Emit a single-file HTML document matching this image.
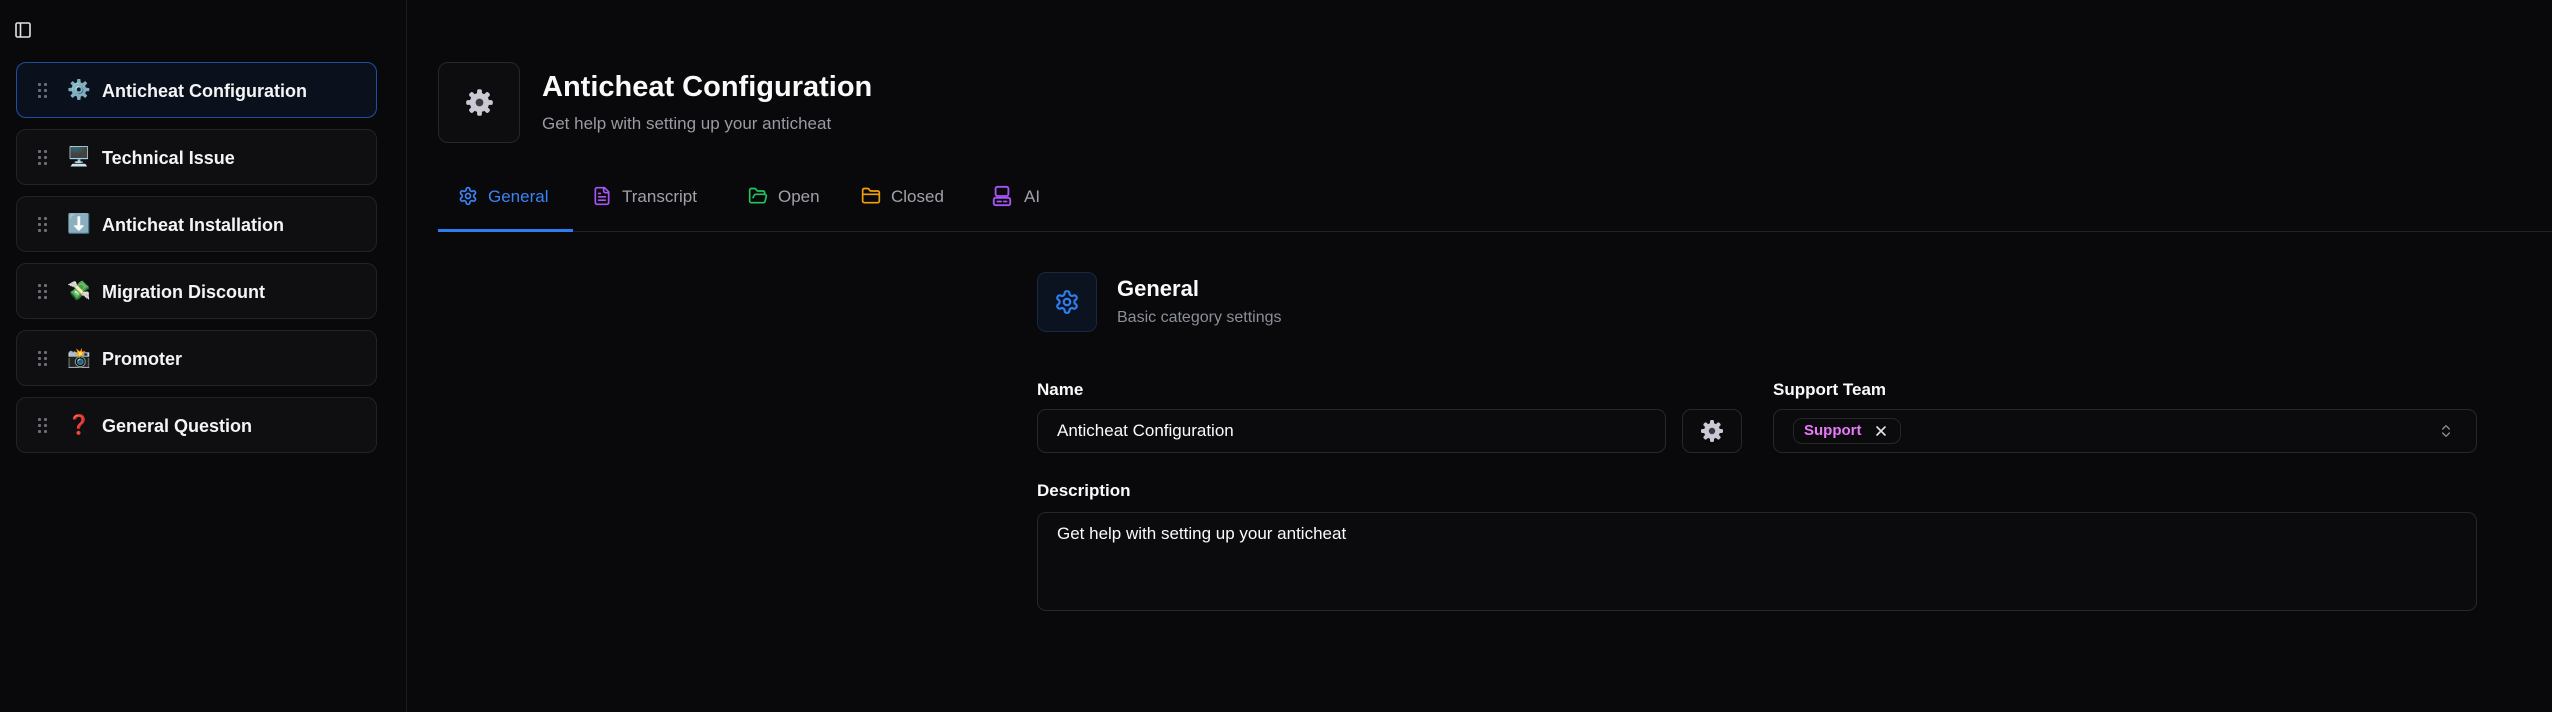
<!DOCTYPE html>
<html><head><meta charset="utf-8"><style>
*{box-sizing:border-box;margin:0;padding:0}
body{width:2552px;height:712px;background:#09090b;font-family:"Liberation Sans","Noto Sans CJK SC",sans-serif;color:#fafafa;position:relative;overflow:hidden}
.abs{position:absolute}
.side{left:0;top:0;width:407px;height:712px;border-right:1px solid #1c1c1f;background:#09090b}
.item{position:absolute;left:16px;width:361px;height:56px;border:1px solid #232327;border-radius:10px;background:#0f0f11}
.item.act{background:#0b111c;border:1.5px solid #1f4fa3}
.dots{position:absolute;left:21px;top:20px;width:10px;height:16px}
.dots i{position:absolute;width:3px;height:3px;border-radius:1px;background:#6b6e76}
.emo{position:absolute;left:50px;top:14px;font-size:19px;line-height:26px;width:24px;text-align:center;font-family:"Noto Color Emoji","DejaVu Sans",sans-serif}
.lbl{position:absolute;left:85px;top:17px;font-size:18px;font-weight:bold;line-height:22px;color:#f4f4f5}
.tab{position:absolute;top:186px;font-size:17px;line-height:22px;color:#a1a1aa}
.tab svg{position:absolute;left:-30px;top:0}
.box{position:absolute;border:1px solid #27272a;border-radius:9px;background:#0b0b0d}
.flbl{position:absolute;font-size:17px;font-weight:bold;line-height:20px;color:#fafafa}
</style></head><body>
<svg width="0" height="0" style="position:absolute"><defs>
<g id="gear"><g fill="#cbc9d3"><rect x="10" y="1" width="4" height="22" rx="1.5"/><rect x="10" y="1" width="4" height="22" rx="1.5" transform="rotate(45 12 12)"/><rect x="10" y="1" width="4" height="22" rx="1.5" transform="rotate(90 12 12)"/><rect x="10" y="1" width="4" height="22" rx="1.5" transform="rotate(135 12 12)"/><circle cx="12" cy="12" r="8"/></g><circle cx="12" cy="12" r="3.2" fill="#3a3940"/></g>
</defs></svg>
<div class="abs side">
 <svg class="abs" style="left:15px;top:22px" width="16" height="16" viewBox="0 0 16 16" fill="none" stroke="#e4e4e7" stroke-width="1.6"><rect x="1" y="1" width="14" height="14" rx="1.5"/><line x1="5.5" y1="1" x2="5.5" y2="15"/></svg>
</div>
<div class="item act" style="top:62px"><div class="dots"><i style="left:0;top:0"></i><i style="left:6px;top:0"></i><i style="left:0;top:6px"></i><i style="left:6px;top:6px"></i><i style="left:0;top:12px"></i><i style="left:6px;top:12px"></i></div><div class="emo">⚙️</div><div class="lbl">Anticheat Configuration</div></div>
<div class="item" style="top:129px"><div class="dots"><i style="left:0;top:0"></i><i style="left:6px;top:0"></i><i style="left:0;top:6px"></i><i style="left:6px;top:6px"></i><i style="left:0;top:12px"></i><i style="left:6px;top:12px"></i></div><div class="emo">🖥️</div><div class="lbl">Technical Issue</div></div>
<div class="item" style="top:196px"><div class="dots"><i style="left:0;top:0"></i><i style="left:6px;top:0"></i><i style="left:0;top:6px"></i><i style="left:6px;top:6px"></i><i style="left:0;top:12px"></i><i style="left:6px;top:12px"></i></div><div class="emo">⬇️</div><div class="lbl">Anticheat Installation</div></div>
<div class="item" style="top:263px"><div class="dots"><i style="left:0;top:0"></i><i style="left:6px;top:0"></i><i style="left:0;top:6px"></i><i style="left:6px;top:6px"></i><i style="left:0;top:12px"></i><i style="left:6px;top:12px"></i></div><div class="emo">💸</div><div class="lbl">Migration Discount</div></div>
<div class="item" style="top:330px"><div class="dots"><i style="left:0;top:0"></i><i style="left:6px;top:0"></i><i style="left:0;top:6px"></i><i style="left:6px;top:6px"></i><i style="left:0;top:12px"></i><i style="left:6px;top:12px"></i></div><div class="emo">📸</div><div class="lbl">Promoter</div></div>
<div class="item" style="top:397px"><div class="dots"><i style="left:0;top:0"></i><i style="left:6px;top:0"></i><i style="left:0;top:6px"></i><i style="left:6px;top:6px"></i><i style="left:0;top:12px"></i><i style="left:6px;top:12px"></i></div><div class="emo" style="color:#e0314b">❓</div><div class="lbl">General Question</div></div>

<div class="box" style="left:438px;top:62px;width:82px;height:81px;border-radius:10px;background:#0d0d0f"></div>
<svg class="abs" style="left:465px;top:88px" width="29" height="29" viewBox="0 0 24 24"><use href="#gear"/></svg>
<div class="abs" style="left:542px;top:70px;font-size:29px;font-weight:bold;line-height:34px">Anticheat Configuration</div>
<div class="abs" style="left:542px;top:113px;font-size:17px;line-height:22px;color:#9a9aa3">Get help with setting up your anticheat</div>

<div class="tab" style="left:488px;color:#3b82f6"><svg width="20" height="20" viewBox="0 0 24 24" fill="none" stroke="#3b82f6" stroke-width="2" stroke-linecap="round" stroke-linejoin="round"><path d="M12.22 2h-.44a2 2 0 0 0-2 2v.18a2 2 0 0 1-1 1.73l-.43.25a2 2 0 0 1-2 0l-.15-.08a2 2 0 0 0-2.73.73l-.22.38a2 2 0 0 0 .73 2.73l.15.1a2 2 0 0 1 1 1.720v.51a2 2 0 0 1-1 1.74l-.15.09a2 2 0 0 0-.73 2.73l.22.38a2 2 0 0 0 2.73.73l.15-.08a2 2 0 0 1 2 0l.43.25a2 2 0 0 1 1 1.73V20a2 2 0 0 0 2 2h.44a2 2 0 0 0 2-2v-.18a2 2 0 0 1 1-1.73l.43-.25a2 2 0 0 1 2 0l.15.08a2 2 0 0 0 2.73-.73l.22-.39a2 2 0 0 0-.73-2.73l-.15-.08a2 2 0 0 1-1-1.74v-.5a2 2 0 0 1 1-1.74l.15-.09a2 2 0 0 0 .73-2.73l-.22-.38a2 2 0 0 0-2.73-.73l-.15.08a2 2 0 0 1-2 0l-.43-.25a2 2 0 0 1-1-1.73V4a2 2 0 0 0-2-2z"/><circle cx="12" cy="12" r="3"/></svg>General</div>
<div class="tab" style="left:622px"><svg width="20" height="20" viewBox="0 0 24 24" fill="none" stroke="#a855f7" stroke-width="2" stroke-linecap="round" stroke-linejoin="round"><path d="M15 2H6a2 2 0 0 0-2 2v16a2 2 0 0 0 2 2h12a2 2 0 0 0 2-2V7Z"/><path d="M14 2v4a2 2 0 0 0 2 2h4"/><path d="M10 9H8M16 13H8M16 17H8"/></svg>Transcript</div>
<div class="tab" style="left:778px"><svg width="20" height="20" viewBox="0 0 24 24" fill="none" stroke="#22c55e" stroke-width="2" stroke-linecap="round" stroke-linejoin="round"><path d="m6 14 1.5-2.9A2 2 0 0 1 9.24 10H20a2 2 0 0 1 1.940 2.5l-1.54 6a2 2 0 0 1-1.95 1.5H4a2 2 0 0 1-2-2V5a2 2 0 0 1 2-2h3.9a2 2 0 0 1 1.69.9l.81 1.2a2 2 0 0 0 1.67.9H18a2 2 0 0 1 2 2v2"/></svg>Open</div>
<div class="tab" style="left:891px"><svg width="20" height="20" viewBox="0 0 24 24" fill="none" stroke="#f59e0b" stroke-width="2" stroke-linecap="round" stroke-linejoin="round"><path d="M20 20a2 2 0 0 0 2-2V8a2 2 0 0 0-2-2h-7.9a2 2 0 0 1-1.69-.9L9.6 3.9A2 2 0 0 0 7.93 3H4a2 2 0 0 0-2 2v13a2 2 0 0 0 2 2Z"/><path d="M2 10h20"/></svg>Closed</div>
<div class="tab" style="left:1024px"><svg width="22" height="22" viewBox="0 0 24 24" fill="none" stroke="#a855f7" stroke-width="2" stroke-linecap="round" stroke-linejoin="round" style="left:-33px;top:-1px"><rect x="5" y="2" width="14" height="10" rx="2"/><rect x="3" y="14" width="18" height="8" rx="2"/><path d="M7 18h4M14 18h3"/></svg>AI</div>
<div class="abs" style="left:438px;top:231px;width:2114px;height:1px;background:#222226"></div>
<div class="abs" style="left:438px;top:229px;width:135px;height:3px;background:#2f7ef0"></div>

<div class="box" style="left:1037px;top:272px;width:60px;height:60px;background:#0b1220;border-color:#1a2740"></div>
<svg class="abs" style="left:1054px;top:289px" width="26" height="26" viewBox="0 0 24 24" fill="none" stroke="#2f7ef0" stroke-width="2" stroke-linecap="round" stroke-linejoin="round"><path d="M12.22 2h-.44a2 2 0 0 0-2 2v.18a2 2 0 0 1-1 1.73l-.43.25a2 2 0 0 1-2 0l-.15-.08a2 2 0 0 0-2.73.73l-.22.38a2 2 0 0 0 .73 2.73l.15.1a2 2 0 0 1 1 1.72v.51a2 2 0 0 1-1 1.74l-.15.09a2 2 0 0 0-.73 2.73l.22.38a2 2 0 0 0 2.73.73l.15-.08a2 2 0 0 1 2 0l.43.25a2 2 0 0 1 1 1.73V20a2 2 0 0 0 2 2h.44a2 2 0 0 0 2-2v-.18a2 2 0 0 1 1-1.73l.43-.25a2 2 0 0 1 2 0l.15.08a2 2 0 0 0 2.73-.73l.22-.39a2 2 0 0 0-.73-2.730l-.15-.08a2 2 0 0 1-1-1.74v-.5a2 2 0 0 1 1-1.74l.15-.09a2 2 0 0 0 .73-2.73l-.22-.38a2 2 0 0 0-2.73-.73l-.15.08a2 2 0 0 1-2 0l-.43-.25a2 2 0 0 1-1-1.73V4a2 2 0 0 0-2-2z"/><circle cx="12" cy="12" r="3"/></svg>
<div class="abs" style="left:1117px;top:276px;font-size:22px;font-weight:bold;line-height:26px">General</div>
<div class="abs" style="left:1117px;top:308px;font-size:16px;line-height:20px;color:#8b8f98">Basic category settings</div>

<div class="flbl" style="left:1037px;top:380px">Name</div>
<div class="box" style="left:1037px;top:409px;width:629px;height:44px"></div>
<div class="abs" style="left:1057px;top:421px;font-size:17px;line-height:20px">Anticheat Configuration</div>
<div class="box" style="left:1682px;top:409px;width:60px;height:44px"></div>
<svg class="abs" style="left:1700px;top:419px" width="24" height="24" viewBox="0 0 24 24"><use href="#gear"/></svg>

<div class="flbl" style="left:1773px;top:380px">Support Team</div>
<div class="box" style="left:1773px;top:409px;width:704px;height:44px"></div>
<div class="abs" style="left:1793px;top:418px;width:108px;height:26px;border:1px solid #27272a;border-radius:9px"></div>
<div class="abs" style="left:1804px;top:422px;font-size:15px;font-weight:bold;line-height:18px;color:#e879f9">Support</div>
<svg class="abs" style="left:1873px;top:423px" width="16" height="16" viewBox="0 0 24 24" fill="none" stroke="#e4e4e7" stroke-width="2.4" stroke-linecap="round"><path d="M18 6 6 18M6 6l12 12"/></svg>
<svg class="abs" style="left:2438px;top:423px" width="16" height="16" viewBox="0 0 24 24" fill="none" stroke="#8b8f98" stroke-width="2" stroke-linecap="round" stroke-linejoin="round"><path d="m7 15 5 5 5-5M7 9l5-5 5 5"/></svg>

<div class="flbl" style="left:1037px;top:481px">Description</div>
<div class="box" style="left:1037px;top:512px;width:1440px;height:99px"></div>
<div class="abs" style="left:1057px;top:524px;font-size:17px;line-height:20px">Get help with setting up your anticheat</div>
</body></html>
